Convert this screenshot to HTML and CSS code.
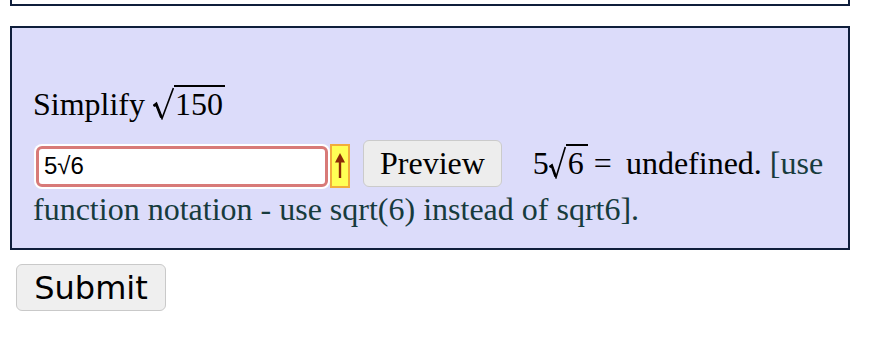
FILE: index.html
```html
<!DOCTYPE html>
<html>
<head>
<meta charset="utf-8">
<title>Simplify</title>
<link rel="stylesheet" href="styles.css">
</head>
<body>
<div class="prev-box"></div>
<div class="problem">
  <p class="question">Simplify <span class="sqrt"><svg class="rad rad-lg" width="21" height="33" viewBox="0 0 21 33"><path d="M0.5 19 L3.2 17 L9 31.5 L20.4 1" fill="none" stroke="#000" stroke-width="1.6" stroke-linejoin="miter"/><path d="M0.8 19 L3.2 17 L8.5 30.5" fill="none" stroke="#000" stroke-width="2.8"/></svg><span class="radicand">150</span></span></p>
  <p class="answer-line"><input class="answer" type="text" value="5√6"><svg class="flag" width="20" height="44" viewBox="0 0 20 44"><rect x="1" y="1" width="18" height="42" fill="#ffff55" stroke="#f2ad3b" stroke-width="2"/><path d="M10 16 L10 34" stroke="#8c2a06" stroke-width="2.4"/><path d="M5 18.5 L10 9 L15 18.5 Z" fill="#8c2a06"/></svg><button class="preview" type="button">Preview</button><span class="result"><span class="mn">5</span><span class="sqrt"><svg class="rad rad-sm" width="17" height="33" viewBox="0 0 17 33"><path d="M0.5 21 L2.8 19.5 L7 31.5 L16.3 1" fill="none" stroke="#000" stroke-width="1.6"/><path d="M0.8 21 L2.8 19.5 L6.6 30.5" fill="none" stroke="#000" stroke-width="2.6"/></svg><span class="radicand radicand-sm">6</span></span><span class="mo">=</span>undefined.</span> <span class="error">[use function notation - use sqrt(6) instead of sqrt6].</span></p>
</div>
<button class="submit" type="button">Submit</button>
</body>
</html>
```
FILE: styles.css
```css
html, body {
  margin: 0;
  padding: 0;
  background: #ffffff;
}

body {
  font-family: "Liberation Serif", "Times New Roman", serif;
  color: #000;
}

.prev-box {
  box-sizing: border-box;
  margin-left: 10px;
  width: 840px;
  height: 6px;
  border: 2px solid #0f1e3b;
  border-top: none;
}

.problem {
  box-sizing: border-box;
  margin: 20px 0 0 10px;
  width: 840px;
  border: 2px solid #0f1e3b;
  background: #dcdcfa;
  padding: 57px 4px 18px 21px;
  font-size: 32px;
}

.problem p {
  margin: 0;
}

.question {
  line-height: normal;
}

.answer-line {
  margin-top: 17px !important;
  line-height: 42px;
}

.sqrt {
  white-space: nowrap;
}

.rad {
  vertical-align: -5px;
}

.radicand {
  display: inline-block;
  line-height: 1;
  padding: 1px 2px 0 1px;
  border-top: 2px solid #000;
}

.radicand-sm {
  padding: 1px 4px 0 2px;
}

.answer {
  box-sizing: border-box;
  width: 292px;
  height: 41px;
  margin: 0 0 0 3px;
  padding: 0 5px;
  border: 3px solid #d87a78;
  border-radius: 6px;
  box-shadow: 0 0 0 2px #ffffff;
  background: #fff;
  font-family: "Liberation Sans", Arial, sans-serif;
  font-size: 24px;
  color: #000;
  outline: none;
  vertical-align: baseline;
}

.flag {
  margin-left: 2px;
  vertical-align: -14px;
}

.preview {
  box-sizing: border-box;
  height: 47px;
  margin-left: 13px;
  padding: 0 16px;
  border: 1px solid #cbcbcb;
  border-radius: 6px;
  background: #ededed;
  font-family: "Liberation Serif", "Times New Roman", serif;
  font-size: 32px;
  line-height: normal;
  color: #000;
  vertical-align: baseline;
}

.result {
  margin-left: 31px;
}

.mo {
  margin: 0 14px 0 6px;
}

.error {
  color: #173b3d;
}

.submit {
  box-sizing: border-box;
  margin: 14px 0 0 16px;
  width: 150px;
  height: 47px;
  padding: 0;
  border: 1px solid #c9c9c9;
  border-radius: 6px;
  background: #efefef;
  font-family: "DejaVu Sans", Verdana, sans-serif;
  font-size: 32px;
  color: #000;
}
```
